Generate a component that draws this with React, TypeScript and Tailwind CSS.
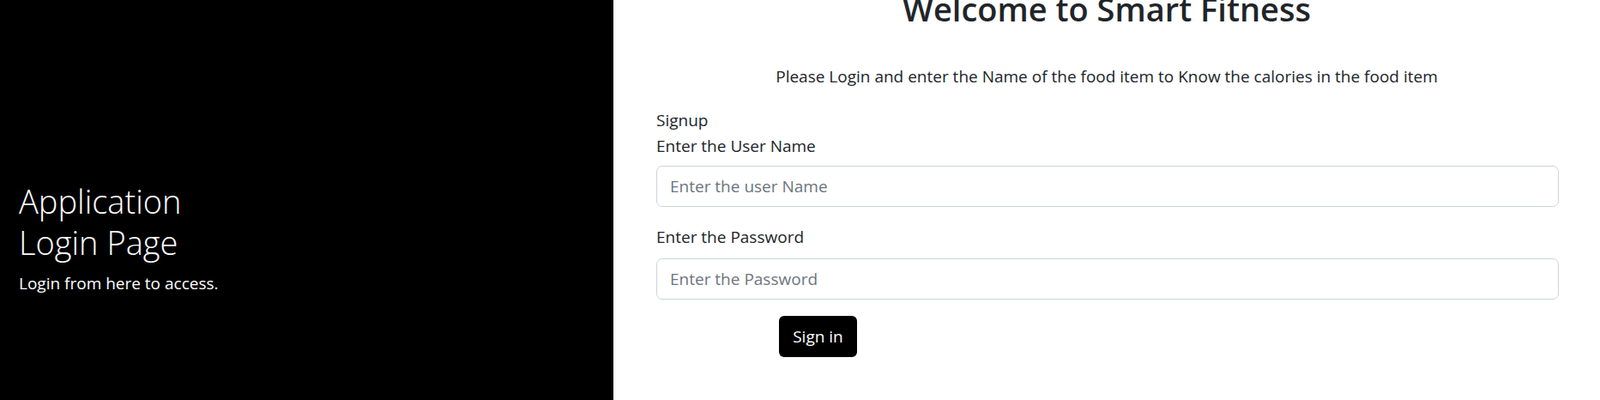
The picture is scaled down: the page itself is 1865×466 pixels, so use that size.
import React from "react";

export default function App() {
  return (
    <div
      className="flex h-[466px] w-full overflow-hidden bg-white"
      style={{ fontFamily: '"Open Sans", "Noto Sans", sans-serif' }}
    >
      <div className="flex w-[715px] shrink-0 flex-col bg-black pl-[22px] pt-[210px] text-white">
        <h2 className="text-[38px] font-light leading-[48px]">
          Application
          <br />
          Login Page
        </h2>
        <p className="mt-[12px] text-[19px] leading-[24px]">Login from here to access.</p>
      </div>
      <div className="flex min-w-0 flex-1 flex-col px-[48px] text-[#212529]">
        <h1 className="mt-[-20px] text-center text-[38px] font-semibold leading-[60px]">
          Welcome to Smart Fitness
        </h1>
        <p className="mt-[37px] text-center text-[19px] leading-[24px]">
          Please Login and enter the Name of the food item to Know the calories in the food item
        </p>
        <div className="mt-[24px] pl-[2px]">
          <div className="text-[19px] leading-[30px]">Signup</div>
          <label className="block text-[19px] leading-[30px]">Enter the User Name</label>
          <input
            type="text"
            placeholder="Enter the user Name"
            className="mt-[8px] block h-[48px] w-full rounded-[7px] border border-[#ced4da] bg-white px-[15px] text-[19px] text-[#212529] placeholder:text-[#6c757d] outline-none"
          />
          <label className="mt-[20px] block text-[19px] leading-[30px]">Enter the Password</label>
          <input
            type="password"
            placeholder="Enter the Password"
            className="mt-[10px] block h-[48px] w-full rounded-[7px] border border-[#ced4da] bg-white px-[15px] text-[19px] text-[#212529] placeholder:text-[#6c757d] outline-none"
          />
          <button
            type="button"
            className="ml-[143px] mt-[19px] h-[48px] w-[91px] rounded-[6px] bg-black text-[19px] text-white"
          >
            Sign in
          </button>
        </div>
      </div>
    </div>
  );
}
